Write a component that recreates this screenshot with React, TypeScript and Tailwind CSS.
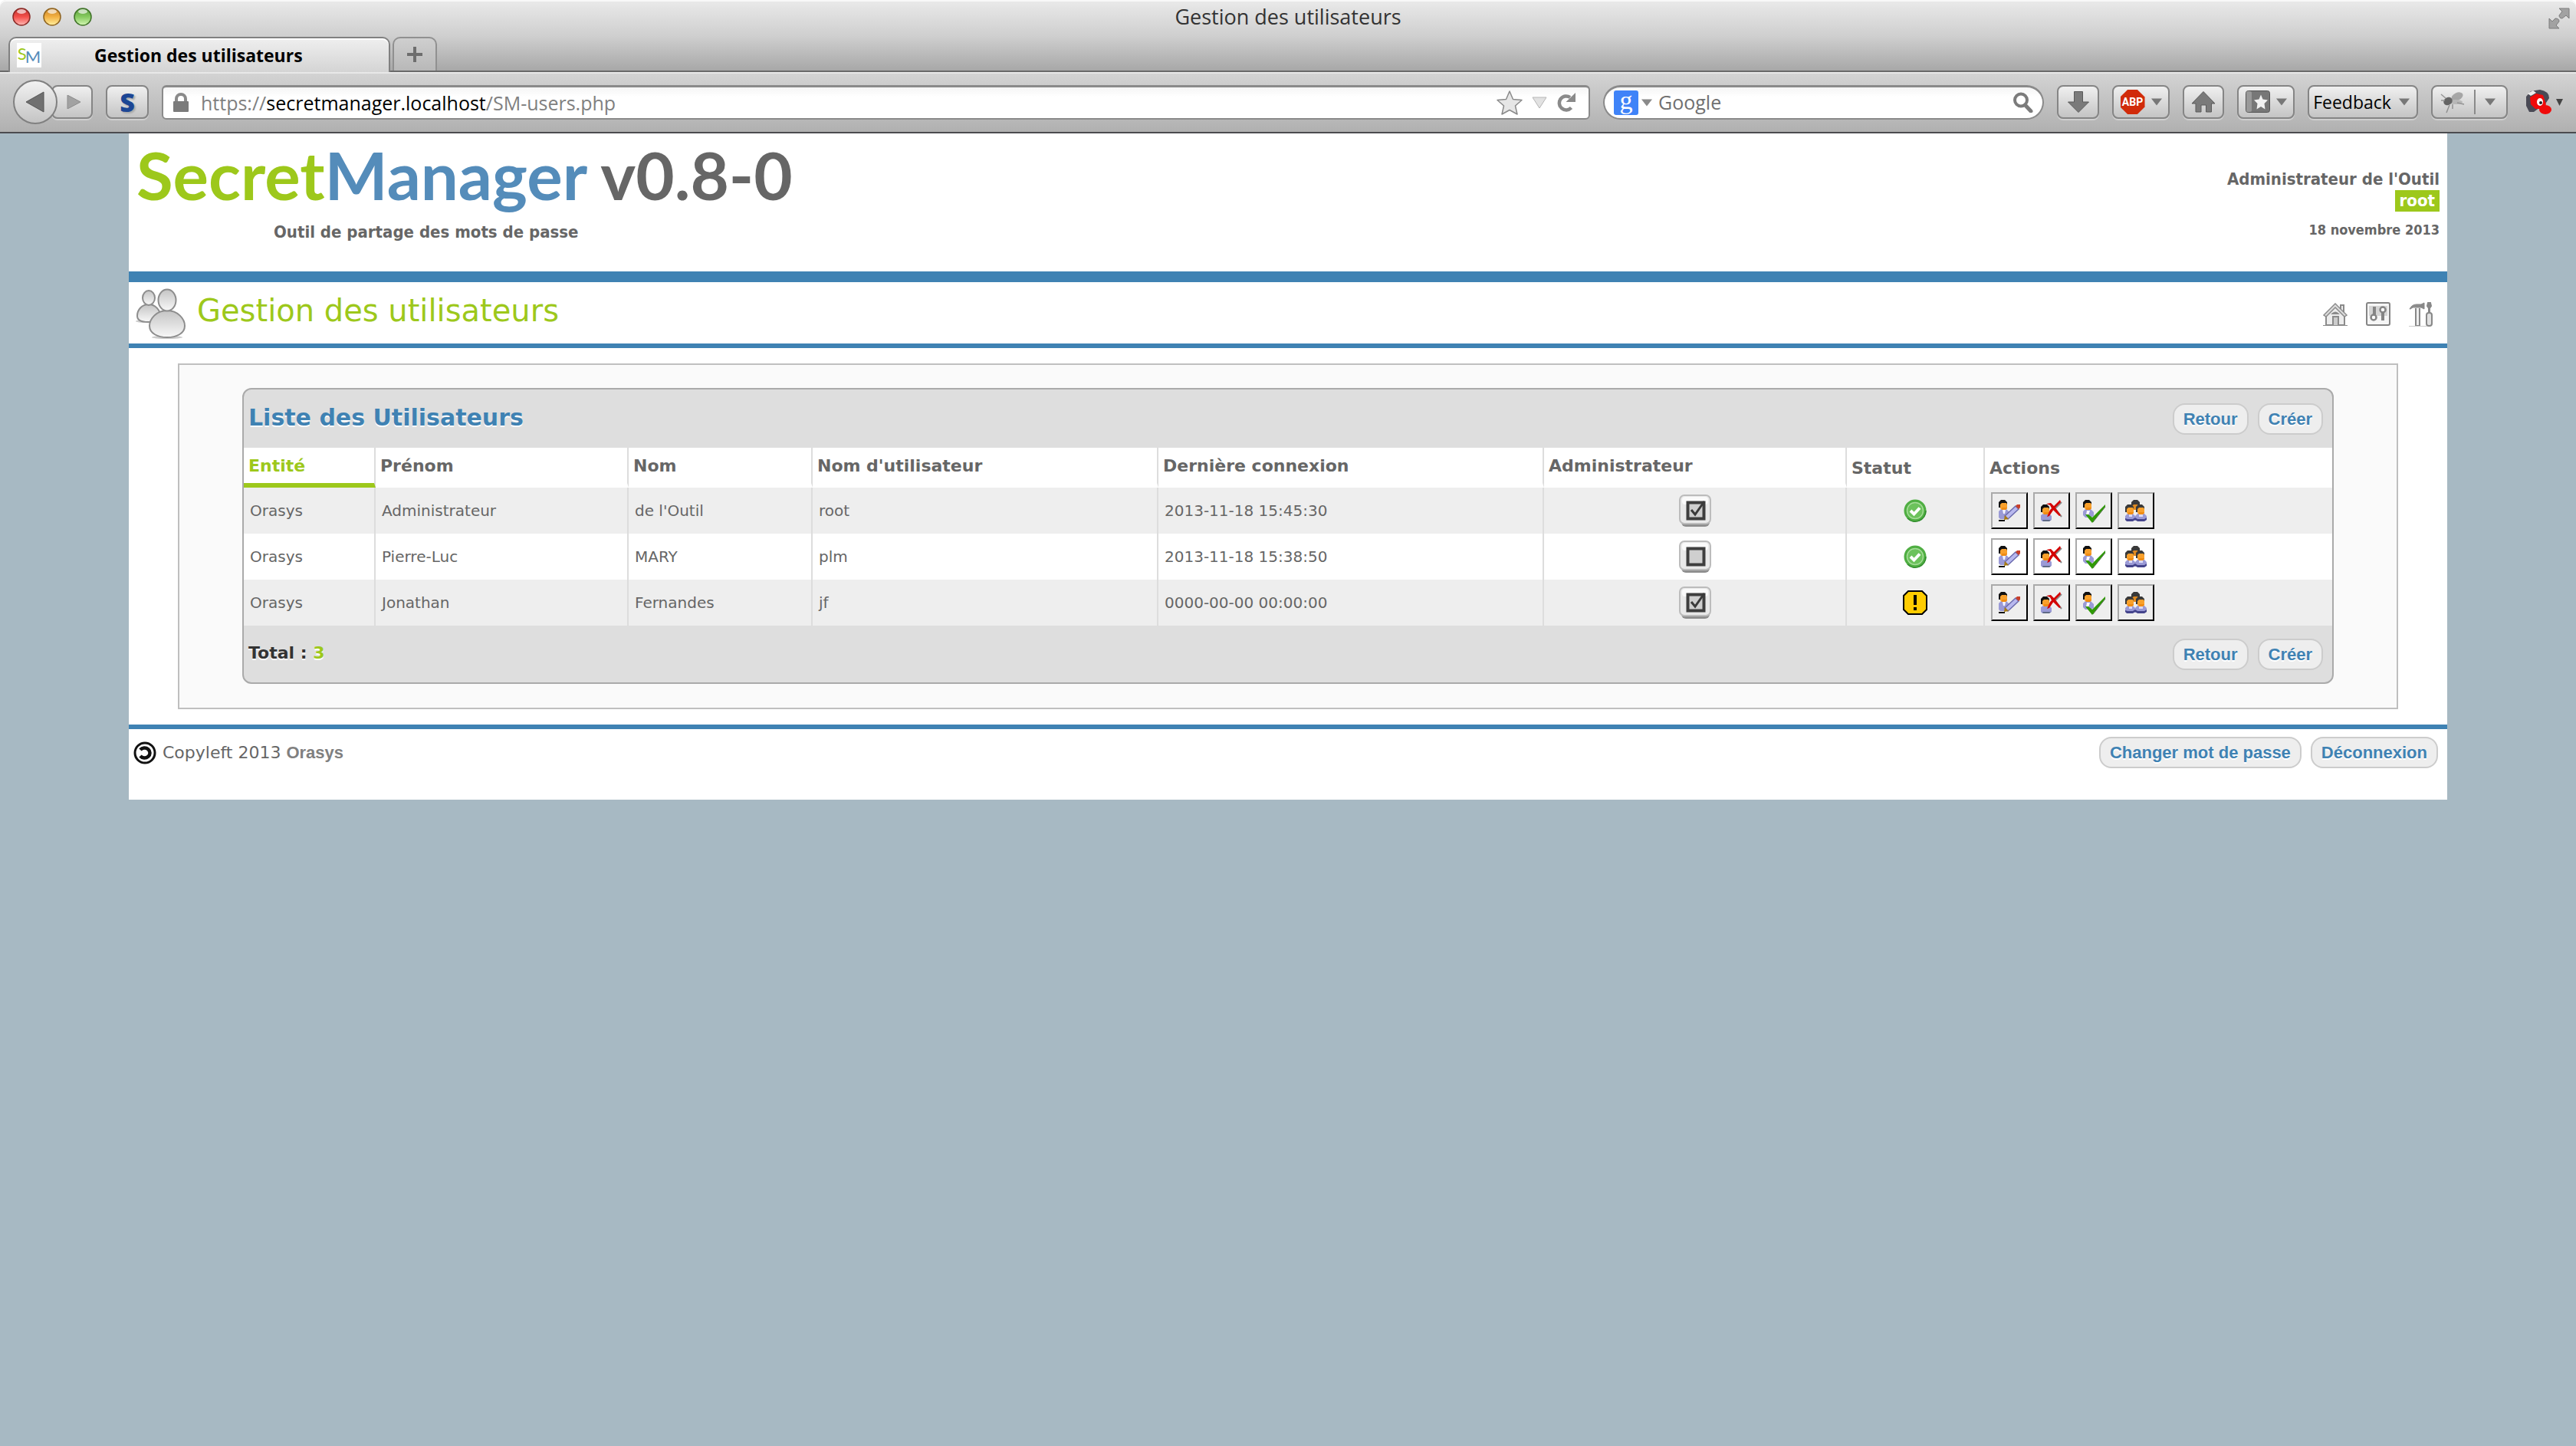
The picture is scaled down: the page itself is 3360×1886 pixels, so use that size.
import React from "react";

type User = {
  entity: string;
  first: string;
  last: string;
  login: string;
  seen: string;
  admin: boolean;
  ok: boolean;
};

const users: User[] = [
  { entity: "Orasys", first: "Administrateur", last: "de l'Outil", login: "root", seen: "2013-11-18 15:45:30", admin: true, ok: true },
  { entity: "Orasys", first: "Pierre-Luc", last: "MARY", login: "plm", seen: "2013-11-18 15:38:50", admin: false, ok: true },
  { entity: "Orasys", first: "Jonathan", last: "Fernandes", login: "jf", seen: "0000-00-00 00:00:00", admin: true, ok: false },
];

/* ---------- browser chrome ---------- */

const toolButton =
  "flex h-11 shrink-0 items-center justify-center rounded-lg border-2 border-[#858585] bg-gradient-to-b from-[#f0f0f0] to-[#c4c4c4] shadow-[0_2px_0_#d0d0d0]";

function Caret({ fill = "#777" }: { fill?: string }) {
  return (
    <svg width="14" height="10" viewBox="0 0 14 10" aria-hidden="true">
      <path d="M0 0.500H14L7 9.500Z" fill={fill} />
    </svg>
  );
}

function Light({ tone }: { tone: "red" | "amber" | "green" }) {
  const fills = {
    red: ["#b9302c", "#f4504b", "#ffb9b4", "#8a2a26"],
    amber: ["#c8832a", "#f3b143", "#fff0a0", "#8f6420"],
    green: ["#5a9a3c", "#86cb5f", "#d4f7b4", "#3f7228"],
  }[tone];
  return (
    <svg width="24" height="24" viewBox="0 0 24 24" aria-hidden="true">
      <defs>
        <linearGradient id={"light-" + tone} x1="0" y1="0" x2="0" y2="1">
          <stop offset="0" stopColor={fills[0]} />
          <stop offset="0.500" stopColor={fills[1]} />
          <stop offset="1" stopColor={fills[2]} />
        </linearGradient>
      </defs>
      <circle cx="12" cy="12" r="11" fill={`url(#light-${tone})`} stroke={fills[3]} strokeWidth="1.500" />
      <ellipse cx="12" cy="5" rx="6" ry="3" fill="#fff" opacity="0.650" />
    </svg>
  );
}

function TitleBar() {
  return (
    <div className="grid h-12 grid-cols-3 items-start px-4 pt-[10px]">
      <div className="flex gap-4">
        <button aria-label="Fermer"><Light tone="red" /></button>
        <button aria-label="Réduire"><Light tone="amber" /></button>
        <button aria-label="Agrandir"><Light tone="green" /></button>
      </div>
      <div className="-mt-1 text-center text-[27px] leading-8 text-[#333]">Gestion des utilisateurs</div>
      <button aria-label="Plein écran" className="-mr-2 justify-self-end">
        <svg width="28" height="28" viewBox="0 0 28 28" fill="#a2a2a2" stroke="#7c7c7c" strokeWidth="1">
          <path d="M14 1H27V14L23 10L18 14C15 14 14 12 14 10L18 5Z" />
          <path d="M1 27V14L5 18L9 14C12 14 14 15 14 18L10 23L14 27Z" />
        </svg>
      </button>
    </div>
  );
}

function TabStrip() {
  return (
    <div className="flex h-[46px] items-end gap-[3px] border-b-2 border-[#6a6a6a] pl-[11px]">
      <div className="-mb-[2px] flex h-[46px] w-[498px] items-center rounded-t-[10px] border-2 border-b-0 border-[#808080] bg-gradient-to-b from-[#efefef] to-[#d4d4d4] pl-[9px] shadow-[inset_0_2px_0_#fff]">
        <span className="flex size-8 items-center justify-center bg-white font-['Lato'] text-[22px] leading-8">
          <span className="pb-1 text-[#9dc81b]">S</span>
          <span className="-ml-[2px] pt-1 text-[#548cba]">M</span>
        </span>
        <span className="ml-[69px] text-[23px] font-bold leading-8 text-black">Gestion des utilisateurs</span>
      </div>
      <button aria-label="Nouvel onglet" className="flex h-[44px] w-[58px] items-center justify-center rounded-t-[10px] border-2 border-b-0 border-[#909090] bg-gradient-to-b from-[#cfcfcf] to-[#b8b8b8]">
        <svg width="20" height="20" viewBox="0 0 20 20" stroke="#6e6e6e" strokeWidth="4">
          <path d="M10 0V20M0 10H20" />
        </svg>
      </button>
    </div>
  );
}

function Toolbar() {
  return (
    <div className="flex h-[80px] items-center gap-[17px] border-b-2 border-[#4b4b4f] bg-gradient-to-b from-[#d4d4d4] to-[#b0b0b0] px-[17px] shadow-[inset_0_2px_0_#e8e8e8]">
      <div className="flex shrink-0 items-center">
        <button aria-label="Précédent" className="z-10 flex size-[58px] items-center justify-center rounded-full border-2 border-[#808080] bg-gradient-to-b from-[#f2f2f2] to-[#c4c4c4]">
          <svg width="24" height="28" viewBox="0 0 24 28"><path d="M23 1V27L0 14Z" fill="#707070" stroke="#555" /></svg>
        </button>
        <button aria-label="Suivant" className={toolButton + " -ml-2 w-[54px] pl-1"}>
          <svg width="18" height="18" viewBox="0 0 18 18"><path d="M1 0V18L18 9Z" fill="#a2a2a2" stroke="#8c8c8c" /></svg>
        </button>
      </div>
      <button aria-label="Extension S" className={toolButton + " w-14"}>
        <span className="text-[34px] font-extrabold leading-9 text-[#1c4695] [text-shadow:2px_2px_2px_#aaa]">S</span>
      </button>

      <div className="flex h-[45px] min-w-0 flex-1 items-center rounded-[6px] border-2 border-t-[3px] border-[#8a8a8a] bg-gradient-to-b from-[#f5f5f5] to-white to-30% pl-[13px] pr-4">
        <svg width="20" height="26" viewBox="0 0 20 26" aria-hidden="true">
          <path d="M4 13V8a6 6 0 0 1 12 0v5" fill="none" stroke="#8a8a8a" strokeWidth="4" />
          <rect y="11" width="20" height="14" rx="1" fill="#7b7b7b" />
        </svg>
        <div className="relative ml-4 h-9 min-w-0 flex-1">
          <input
            aria-label="Adresse"
            defaultValue="https://secretmanager.localhost/SM-users.php"
            className="h-full w-full bg-transparent text-[25px] text-transparent caret-black outline-none"
          />
          <div aria-hidden="true" className="pointer-events-none absolute inset-0 whitespace-nowrap text-[25px] leading-9 text-[#808080]">
            https://<span className="text-black">secretmanager.localhost</span>/SM-users.php
          </div>
        </div>
        <div className="flex items-center gap-[12px]">
          <button aria-label="Marquer cette page">
            <svg width="34" height="34" viewBox="0 0 34 34"><path d="M17 2L21.500 12.500L33 13.500L24.500 21L27 32L17 26.500L7 32L9.500 21L1 13.500L12.500 12.500Z" fill="#e6e6e6" stroke="#8a8a8a" strokeWidth="1.500" strokeLinejoin="round" /></svg>
          </button>
          <button aria-label="Historique">
            <svg width="20" height="16" viewBox="0 0 20 16"><path d="M1 1H19L10 15Z" fill="#e2e2e2" stroke="#b5b5b5" /></svg>
          </button>
          <button aria-label="Actualiser">
            <svg width="26" height="26" viewBox="0 0 26 26">
              <path d="M19.500 19.500A9 9 0 1 1 18 6" fill="none" stroke="#8a8a8a" strokeWidth="4.500" />
              <path d="M25 0V12H12.500Z" fill="#8a8a8a" />
            </svg>
          </button>
        </div>
      </div>

      <div className="flex h-[45px] w-[575px] shrink items-center rounded-full border-2 border-t-[3px] border-[#8a8a8a] bg-gradient-to-b from-[#f5f5f5] to-white to-30% pl-3 pr-3">
        <button aria-label="Choisir le moteur" className="flex items-center gap-1">
          <span className="flex size-8 items-center justify-center rounded-[3px] bg-[#3f83f8] pb-[6px] font-['Liberation_Serif'] text-[34px] leading-8 text-white">g</span>
          <Caret fill="#8a8a8a" />
        </button>
        <input aria-label="Recherche" placeholder="Google" className="ml-2 h-9 min-w-0 flex-1 bg-transparent text-[25px] outline-none placeholder:text-[#707070]" />
        <button aria-label="Rechercher">
          <svg width="27" height="27" viewBox="0 0 27 27" fill="none" stroke="#7b7b7b">
            <circle cx="11" cy="10.500" r="8" strokeWidth="4" />
            <path d="M16.500 17L24 25" strokeWidth="5" strokeLinecap="round" />
          </svg>
        </button>
      </div>

      <button aria-label="Téléchargements" className={toolButton + " w-[55px]"}>
        <svg width="28" height="28" viewBox="0 0 28 28"><path d="M8.500 0.500H19.500V14H27.500L14 27.500L0.500 14H8.500Z" fill="#7a7a7a" stroke="#5a5a5a" /></svg>
      </button>
      <button aria-label="Adblock Plus" className={toolButton + " w-[75px] gap-2"}>
        <span className="flex size-8 items-center justify-center bg-[#d12b0a] font-['Roboto'] text-[14px] font-bold leading-8 text-white [clip-path:polygon(30%_0,70%_0,100%_30%,100%_70%,70%_100%,30%_100%,0_70%,0_30%)]">ABP</span>
        <Caret />
      </button>
      <button aria-label="Accueil du navigateur" className={toolButton + " w-[54px]"}>
        <svg width="32" height="28" viewBox="0 0 32 28"><path d="M16 0.500L31 16H26.500V27H19.500V18H13V27H6V16H1Z" fill="#7a7a7a" stroke="#5a5a5a" /></svg>
      </button>
      <button aria-label="Marque-pages" className={toolButton + " w-[75px] gap-2"}>
        <svg width="32" height="30" viewBox="0 0 32 30">
          <rect x="0.500" y="0.500" width="31" height="28" rx="3" fill="#777" stroke="#555" />
          <rect x="1" y="1" width="7" height="27" rx="2" fill="#999" />
          <path d="M20 5.500L22.500 11.500L29 12.500L24.500 17L25.500 24.500L20 21L14.500 24.500L15.500 17L11 12.500L17.500 11.500Z" fill="#f2f2f2" />
        </svg>
        <Caret />
      </button>
      <button className={toolButton + " w-[144px] gap-[10px] pr-1 text-[23px] text-black"}>
        Feedback
        <Caret />
      </button>
      <button aria-label="Insecte" className={toolButton + " w-[100px] gap-[12px] pr-1"}>
        <svg width="32" height="32" viewBox="0 0 32 32">
          <g opacity="0.700">
            <ellipse cx="22" cy="9" rx="8" ry="5" transform="rotate(-25 22 9)" fill="#8d8d8d" />
            <ellipse cx="20" cy="16" rx="9" ry="3" fill="#aaa" />
            <ellipse cx="10" cy="15" rx="6" ry="5" transform="rotate(-30 10 15)" fill="#333" />
            <path d="M1 6L7 11M1 14H6M12 20L8 30M16 19V25M22 17L31 19" stroke="#777" strokeWidth="1.500" />
          </g>
        </svg>
        <span className="h-8 w-[2px] bg-[#8a8a8a]" />
        <Caret />
      </button>
      <button aria-label="Script" className="flex w-[55px] shrink-0 items-center justify-end gap-[5px]">
        <svg width="36" height="34" viewBox="0 0 36 34">
          <path d="M8 3L20 1Q32 3 32 12L28 18L20 24L12 30H6L2 22V10Z" fill="#4a4a55" />
          <path d="M7 11L15 6L24 8L28 20L24 26L14 26L8 20Z" fill="#f00a0a" />
          <path d="M4 6L11 2L15 5L8 9Z" fill="#eee" />
          <ellipse cx="20" cy="17" rx="4" ry="5" fill="#fff" />
          <circle cx="21" cy="18" r="2" fill="#222" />
          <ellipse cx="27" cy="27" rx="8" ry="6" fill="#f00a0a" />
        </svg>
        <svg width="9" height="9" viewBox="0 0 9 9"><path d="M0 0H9L4.500 9Z" fill="#444" /></svg>
      </button>
    </div>
  );
}

/* ---------- page icons ---------- */

function UsersIcon() {
  return (
    <svg width="66" height="66" viewBox="0 0 66 66" aria-hidden="true">
      <defs>
        <linearGradient id="people" x1="0" y1="0" x2="0" y2="1">
          <stop offset="0" stopColor="#c4c4c4" />
          <stop offset="1" stopColor="#f8f8f8" />
        </linearGradient>
      </defs>
      <ellipse cx="14" cy="43" rx="14" ry="2" fill="#ccc" />
      <ellipse cx="41" cy="64" rx="20" ry="2" fill="#ccc" />
      <g fill="url(#people)" stroke="#8d8d8d" strokeWidth="2">
        <path d="M17 21C26 21 32 29 32 36C32 42 24 44 16 44C8 44 2 42 2 36C2 28 8 21 17 21Z" />
        <ellipse cx="17" cy="12.500" rx="8" ry="9.500" />
        <path d="M41 29C55 29 64 40 64 49C64 59 53 64 41 64C29 64 18 59 18 49C18 40 27 29 41 29Z" />
        <ellipse cx="41" cy="15.500" rx="11.500" ry="14" />
      </g>
    </svg>
  );
}

function HomeIcon() {
  return (
    <svg width="32" height="32" viewBox="0 0 32 32" fill="none" stroke="#8b8b8b" strokeWidth="2" aria-hidden="true">
      <path d="M4 16V30H28V16L16 5Z" fill="#ececec" />
      <path d="M23 9V4H27V13" fill="#eee" />
      <path d="M1 17L16 2L31 17L28 19L16 7L4 19Z" fill="#ddd" strokeWidth="1.500" />
      <path d="M10 16Q16 9 22 16Z" fill="#8b8b8b" stroke="none" />
      <path d="M13 30V19H20V30" fill="#ccc" />
      <path d="M0 30.500H32" strokeWidth="1" />
    </svg>
  );
}

function PanelIcon() {
  return (
    <svg width="32" height="32" viewBox="0 0 32 32" fill="none" stroke="#858585" strokeWidth="2" aria-hidden="true">
      <rect x="1" y="1" width="30" height="29" rx="2" fill="#f6f6f6" />
      <rect x="4" y="5" width="24" height="13" fill="#d5d5d5" stroke="none" />
      <path d="M11 6V17" strokeWidth="4" />
      <circle cx="10" cy="20" r="3.500" fill="#fff" strokeWidth="2.500" />
      <path d="M22 13V24" strokeWidth="4" />
      <circle cx="22" cy="10" r="3.500" fill="#fff" strokeWidth="2.500" />
    </svg>
  );
}

function ToolsIcon() {
  return (
    <svg width="32" height="32" viewBox="0 0 32 32" fill="none" stroke="#888" strokeWidth="2" aria-hidden="true">
      <path d="M1 9Q4 3 10 3H16V7H9Q5 6 2 9Z" fill="#8c8c8c" strokeWidth="1" />
      <path d="M16 3L20 1V9L16 7Z" fill="#888" strokeWidth="1" />
      <path d="M9 8V31H14V8" fill="#eee" />
      <path d="M26 15V8L24 5L25 1H28L29 5L27 8V15" fill="#888" />
      <rect x="23" y="14" width="7" height="17" rx="3" fill="#e2e2e2" />
      <path d="M0 31.500H24" stroke="#ccc" strokeWidth="1" />
    </svg>
  );
}

function AdminBox({ checked, name }: { checked: boolean; name: string }) {
  return (
    <span className="relative inline-block size-[42px] align-middle">
      <input type="checkbox" defaultChecked={checked} aria-label={"Administrateur : " + name} className="peer absolute inset-0 size-full appearance-none" />
      <svg width="42" height="42" viewBox="0 0 42 42" className="pointer-events-none absolute inset-0 [&_.tick]:hidden peer-checked:[&_.tick]:block" aria-hidden="true">
        <rect x="3" y="5" width="37" height="37" rx="6" fill="#8f8f8f" />
        <rect x="1" y="1" width="40" height="37" rx="6" fill="#e9e9e9" stroke="#bcbcbc" strokeWidth="2" />
        <rect x="4" y="3" width="34" height="10" rx="4" fill="#fafafa" />
        <rect x="11.500" y="10.500" width="21" height="21" fill="#cfcfcf" stroke="#3e3e3e" strokeWidth="4" />
        <path className="tick" d="M16 20L21 26L33 9" fill="none" stroke="#3a3a3a" strokeWidth="3" />
      </svg>
    </span>
  );
}

function StatusIcon({ ok }: { ok: boolean }) {
  if (ok)
    return (
      <svg width="32" height="32" viewBox="0 0 32 32" className="inline-block align-middle" role="img" aria-label="Actif">
        <circle cx="16" cy="16" r="14.500" fill="#4fae42" />
        <path d="M6 26A14 14 0 0 0 30 16" fill="none" stroke="#2f8a2c" strokeWidth="1.500" />
        <circle cx="16" cy="16" r="10.500" fill="#6cc25c" stroke="#a5dc98" strokeWidth="1.500" />
        <path d="M10 16L14.500 20.500L22 12.500" fill="none" stroke="#fff" strokeWidth="4" />
      </svg>
    );
  return (
    <svg width="32" height="32" viewBox="0 0 32 32" className="inline-block align-middle" role="img" aria-label="Attention">
      <path d="M7 1H25L31 7V25L25 31H7L1 25V7Z" fill="#fc0" stroke="#000" strokeWidth="2" />
      <rect x="14" y="6" width="4" height="13" fill="#000" />
      <rect x="14" y="22" width="4" height="4" fill="#000" />
    </svg>
  );
}

function Head({ x, y, hair = "#111" }: { x: number; y: number; hair?: string }) {
  return (
    <g transform={`translate(${x} ${y})`}>
      <path d="M0 10V3L3 0H8L11 3V7H3V10Z" fill={hair} />
      <path d="M2 6L4 4H10L11 6V11L9 13H4L2 11Z" fill="#f9a02b" />
      <path d="M4 10H11V11L9 13H4Z" fill="#f08c14" />
    </g>
  );
}

function EditIcon() {
  return (
    <svg width="32" height="32" viewBox="0 0 32 32" aria-hidden="true">
      <path d="M2 25V17L5 14H12L16 18V24L12 27H4Z" fill="#9a9ad6" />
      <path d="M7 15H11L10 20H8Z" fill="#f4f4ff" />
      <Head x={2} y={2} />
      <path d="M10 23L24 10L28 14L14 27Z" fill="#b8b8ee" stroke="#6b6bae" strokeWidth="1.500" />
      <path d="M24 10L26 8H30V12L28 14Z" fill="#c8402a" />
      <path d="M10 22L9 28L15 27Z" fill="#a77b12" />
      <path d="M2 29H10" stroke="#111" strokeWidth="2" />
    </svg>
  );
}

function DeleteIcon() {
  return (
    <svg width="32" height="32" viewBox="0 0 32 32" aria-hidden="true">
      <path d="M2 28V22L5 20H13L16 23V28L13 30H4Z" fill="#9a9ad6" />
      <path d="M4 28H15L13 30H5Z" fill="#5f6a86" />
      <Head x={2} y={8} />
      <path d="M20 14L29 5M20 13L29 24" fill="none" stroke="#8a8a8a" strokeWidth="2" />
      <path d="M10 24L14 15L27 2L28 5L19 14L13 23Z" fill="#d40000" />
      <path d="M9 7L15 6L20 11L28 22L26 23L16 13L14 9Z" fill="#d40000" />
    </svg>
  );
}

function RightsIcon() {
  return (
    <svg width="32" height="32" viewBox="0 0 32 32" aria-hidden="true">
      <path d="M2 22V17L5 14H12L16 18V23L12 25H5Z" fill="#9a9ad6" />
      <path d="M7 16H11L9 22H6Z" fill="#fff" />
      <Head x={2} y={2} />
      <path d="M5 21H9L14 25L31 8V11L14 32Z" fill="#2f9a06" />
      <path d="M15 31L31 11" stroke="#56704e" strokeWidth="1" />
    </svg>
  );
}

function GroupIcon() {
  return (
    <svg width="32" height="32" viewBox="0 0 32 32" aria-hidden="true">
      <path d="M10 9V5L13 2H18L21 5V10L17 14H12Z" fill="#3a3a3a" />
      <path d="M11 10L13 8H18L20 10V15H12Z" fill="#e08a20" />
      <path d="M2 27V23L5 20H12L15 23L18 20H27L30 23V27L27 29H4Z" fill="#9a9ad6" />
      <path d="M7 20H11V24H7ZM20 20H25V24H20Z" fill="#dcdcf8" />
      <path d="M2 26L5 27H12L15 25L18 27H27L30 25V28L27 30H18L15 28L12 30H4L2 28Z" fill="#45458c" />
      <Head x={2} y={8} hair="#3a3a3a" />
      <Head x={16} y={8} hair="#3a3a3a" />
    </svg>
  );
}

function CopyleftIcon() {
  return (
    <svg width="30" height="30" viewBox="0 0 30 30" fill="none" stroke="#111" aria-hidden="true">
      <circle cx="15" cy="15" r="13" strokeWidth="3" />
      <path d="M9 11A7 6.500 0 1 1 9 19" strokeWidth="4.500" />
    </svg>
  );
}

/* ---------- page ---------- */

function PillLink({ children }: { children: React.ReactNode }) {
  return (
    <a
      href="#"
      className="rounded-[16px] border-2 border-[#ccc] bg-[#eee] px-3 py-[6px] font-['Liberation_Sans'] text-[22px] font-bold leading-[25px] text-[#3f82b3] [text-shadow:0_2px_0_#fff]"
    >
      {children}
    </a>
  );
}

const columns = [
  { label: "Prénom", width: "w-[330px]" },
  { label: "Nom", width: "w-[240px]" },
  { label: "Nom d'utilisateur", width: "w-[451px]" },
  { label: "Dernière connexion", width: "w-[503px]" },
  { label: "Administrateur", width: "w-[395px]" },
];

const actions = [
  { label: "Modifier", icon: <EditIcon /> },
  { label: "Supprimer", icon: <DeleteIcon /> },
  { label: "Vérifier", icon: <RightsIcon /> },
  { label: "Groupes", icon: <GroupIcon /> },
];

function UserTable() {
  const cell = "border-r-2 border-[#ddd] px-2 py-0";
  const head = "border-r-2 border-r-[#ddd] px-[6px] py-0 text-left";
  return (
    <table className="w-full table-fixed border-separate border-spacing-0">
      <thead>
        <tr className="h-[52px] bg-white text-[22px] text-[#666]">
          <th scope="col" className={head + " w-[172px] border-b-[6px] border-b-[#9dc81b] text-[#9dc81b]"}>Entité</th>
          {columns.map((c) => (
            <th key={c.label} scope="col" className={head + " border-b-[6px] border-b-white " + c.width}>{c.label}</th>
          ))}
          <th scope="col" className={head + " w-[180px]"}>Statut</th>
          <th scope="col" className="px-[6px] py-0 text-left">Actions</th>
        </tr>
      </thead>
      <tbody>
        {users.map((u) => (
          <tr key={u.login} className="h-[60px] text-[20px] text-[#666] odd:bg-[#eee] even:bg-white">
            <td className={cell}>{u.entity}</td>
            <td className={cell}>{u.first}</td>
            <td className={cell}>{u.last}</td>
            <td className={cell}>{u.login}</td>
            <td className={cell}>{u.seen}</td>
            <td className={cell + " text-center"}><AdminBox checked={u.admin} name={u.login} /></td>
            <td className={cell + " text-center"}><StatusIcon ok={u.ok} /></td>
            <td className="px-2 py-0">
              <div className="flex gap-[7px]">
                {actions.map((a) => (
                  <button key={a.label} aria-label={a.label + " " + u.login} className="border-2 border-b-black border-l-[#aaa] border-r-black border-t-[#aaa] p-[6px]">
                    {a.icon}
                  </button>
                ))}
              </div>
            </td>
          </tr>
        ))}
      </tbody>
    </table>
  );
}

export default function App() {
  return (
    <div className="flex min-h-screen flex-col bg-[#a7b9c3] font-['DejaVu_Sans',sans-serif]">
      <header className="bg-white font-['Open_Sans',sans-serif]">
        <div className="rounded-t-lg bg-gradient-to-b from-[#eaeaea] via-[#cfcfcf] to-[#a6a6a6] shadow-[inset_0_2px_0_#f8f8f8]">
          <TitleBar />
          <TabStrip />
        </div>
        <Toolbar />
      </header>

      <div className="mx-auto w-[90%] bg-white">
        <div className="flex h-[180px] justify-between px-[10px]">
          <div className="pt-[10px]">
            <h1 className="whitespace-nowrap font-['Lato'] text-[87px] font-bold leading-[88px]">
              <span className="text-[#9dc81b]">Secret</span>
              <span className="text-[#548cba]">Manager</span>
              <span className="text-[#666]"> v0.8-0</span>
            </h1>
            <p className="mt-[17px] pl-[179px] font-['DejaVu_Sans_Condensed'] text-[22px] font-bold leading-7 text-[#666]">Outil de partage des mots de passe</p>
          </div>
          <div className="flex flex-col items-end pt-[46px] font-['DejaVu_Sans_Condensed'] text-[22px] font-bold leading-7 text-[#666]">
            <span>Administrateur de l'Outil</span>
            <span className="bg-[#9dc81b] px-[6px] text-white">root</span>
            <span className="mt-3 text-[18px] leading-6">18 novembre 2013</span>
          </div>
        </div>

        <div className="flex h-[100px] items-start justify-between border-b-[6px] border-t-[14px] border-[#3f82b3] pl-[9px] pr-[18px] pt-2">
          <div className="flex items-start gap-[14px]">
            <UsersIcon />
            <h2 className="pt-[5px] text-[40px] leading-[48px] text-[#9dc81b]">Gestion des utilisateurs</h2>
          </div>
          <nav className="flex gap-6 pt-[18px]">
            <a href="#" aria-label="Accueil"><HomeIcon /></a>
            <a href="#" aria-label="Préférences"><PanelIcon /></a>
            <a href="#" aria-label="Administration"><ToolsIcon /></a>
          </nav>
        </div>

        <main className="px-16 pb-5 pt-5">
          <div className="border-2 border-[#bfbfbf] bg-[#fafafa] px-[82px] pb-[31px] pt-[30px]">
            <section className="overflow-hidden rounded-[12px] border-2 border-[#aaa] bg-[#dedede]">
              <div className="flex h-[76px] items-center justify-between pl-[6px] pr-3">
                <h3 className="pb-1 text-[30px] font-bold text-[#3f82b3] [text-shadow:0_2px_0_#fff]">Liste des Utilisateurs</h3>
                <div className="flex gap-3">
                  <PillLink>Retour</PillLink>
                  <PillLink>Créer</PillLink>
                </div>
              </div>
              <UserTable />
              <div className="flex h-[74px] items-center justify-between pl-[6px] pr-3">
                <p className="pb-[3px] text-[22px] font-bold text-[#333] [text-shadow:0_2px_0_#fff]">
                  Total : <span className="text-[#9dc81b]">3</span>
                </p>
                <div className="flex gap-3">
                  <PillLink>Retour</PillLink>
                  <PillLink>Créer</PillLink>
                </div>
              </div>
            </section>
          </div>
        </main>

        <footer className="flex items-start justify-between border-t-[6px] border-[#3f82b3] pb-[41px] pl-[6px] pr-3 pt-[10px]">
          <div className="flex h-[41px] items-center gap-2 text-[22px] text-[#666]">
            <CopyleftIcon />
            <span>
              Copyleft 2013 <a href="#" className="font-['Liberation_Sans'] font-bold text-[#808080]">Orasys</a>
            </span>
          </div>
          <div className="flex gap-3">
            <PillLink>Changer mot de passe</PillLink>
            <PillLink>Déconnexion</PillLink>
          </div>
        </footer>
      </div>
    </div>
  );
}
